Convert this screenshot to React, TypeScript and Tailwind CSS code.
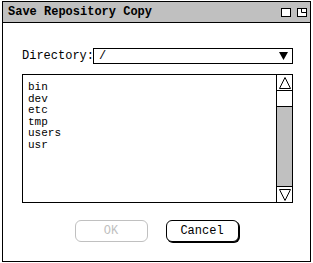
import React from 'react';

const mono = { fontFamily: '"Liberation Mono", "Courier New", monospace' };

const items = ['bin', 'dev', 'etc', 'tmp', 'users', 'usr'];

const App: React.FC = () => {
  return (
    <div className="w-[313px] h-[263px] bg-white pt-[1px] pl-[2px]" style={mono}>
      <div className="w-[309px] h-[261px] border border-black flex flex-col bg-white">
        {/* title bar */}
        <div className="h-[21px] bg-[#c0c0c0] border-b border-black flex items-center pl-[5px] pr-[3px] shrink-0">
          <span className="text-[12px] font-bold text-black leading-none flex-1">Save Repository Copy</span>
          <div className="flex items-center gap-[6px]">
            <div className="w-[10px] h-[9px] border border-black bg-white" />
            <svg width="10" height="9" viewBox="0 0 10 9" className="block">
              <rect x="0.5" y="0.5" width="9" height="8" fill="#fff" stroke="#000" />
              <path d="M4.5 0.5 V4.5 H9.5" fill="none" stroke="#000" />
            </svg>
          </div>
        </div>

        {/* body */}
        <div className="flex-1 flex flex-col pt-[25px] pl-[19px] pr-[17px]">
          <div className="flex items-center h-[16px]">
            <span className="text-[12px] text-black w-[71px] leading-none">Directory:</span>
            <div className="flex-1 h-[16px] border border-black flex items-center pl-[5px] pr-[4px]">
              <span className="text-[12px] text-black flex-1 leading-none">/</span>
              <svg width="9" height="8" viewBox="0 0 9 8" className="block">
                <path d="M0 0 H9 L4.5 8 Z" fill="#000" />
              </svg>
            </div>
          </div>

          <div className="mt-[10px] h-[129px] border border-black flex">
            <div className="flex-1 pl-[5px] pt-[7px] text-[11px] leading-[11.6px] text-black">
              {items.map((it) => (
                <div key={it}>{it}</div>
              ))}
            </div>
            <div className="w-[16px] border-l border-black flex flex-col">
              <div className="h-[16px] border-b border-black flex items-center justify-center bg-white">
                <svg width="12" height="12" viewBox="0 0 12 12" className="block">
                  <path d="M6 0.5 L11.5 11.5 H0.5 Z" fill="#fff" stroke="#000" />
                </svg>
              </div>
              <div className="h-[16px] border-b border-black bg-white" />
              <div className="flex-1 bg-[#c0c0c0]" />
              <div className="h-[16px] border-t border-black flex items-center justify-center bg-white">
                <svg width="12" height="12" viewBox="0 0 12 12" className="block">
                  <path d="M0.5 0.5 H11.5 L6 11.5 Z" fill="#fff" stroke="#000" />
                </svg>
              </div>
            </div>
          </div>
        </div>

        {/* buttons */}
        <div className="flex justify-center gap-[18px] pb-[19px]">
          <button className="w-[73px] h-[22px] rounded-[6px] border border-[#c0c0c0] text-[12px] text-[#c0c0c0] bg-white">
            OK
          </button>
          <button className="w-[73px] h-[22px] rounded-[6px] border border-black shadow-[1px_1px_0_#000] text-[12px] text-black bg-white">
            Cancel
          </button>
        </div>
      </div>
    </div>
  );
};

export default App;
